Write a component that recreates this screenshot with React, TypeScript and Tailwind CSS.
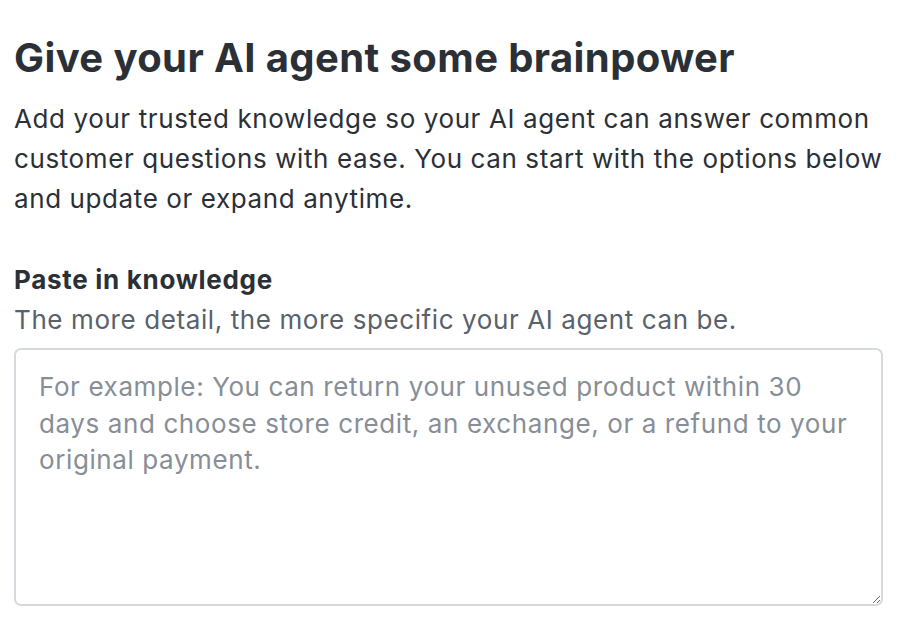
export default function App() {
  return (
    <div className="min-h-screen bg-white px-[14px] pt-[34px] text-[#2b3037] font-['Inter','Liberation_Sans',sans-serif]">
      <h1 className="text-[40px] font-bold leading-[48px] tracking-[0.4px]">
        Give your AI agent some brainpower
      </h1>
      <p className="mt-[17px] text-[26px] leading-[40px] tracking-[0.6px]">
        Add your trusted knowledge so your AI agent can answer common customer questions with ease. You can start
        with the options below and update or expand anytime.
      </p>
      <div className="mt-[41px]">
        <label htmlFor="knowledge" className="block text-[26px] font-bold leading-[40px] tracking-[0.7px]">
          Paste in knowledge
        </label>
        <p className="text-[26px] leading-[40px] tracking-[0.6px] text-[#59616b]">
          The more detail, the more specific your AI agent can be.
        </p>
        <textarea
          id="knowledge"
          className="mt-[8px] block h-[258px] w-[869px] rounded-[7px] border-2 border-[#d6d9dd] pl-[23px] pr-[24px] pt-[19px] pb-[16px] text-[26px] leading-[36.5px] tracking-[0.6px] text-[#2b3037] outline-none placeholder:text-[#878e97] font-['Inter','Liberation_Sans',sans-serif]"
          placeholder="For example: You can return your unused product within 30 days and choose store credit, an exchange, or a refund to your original payment."
        />
      </div>
    </div>
  );
}
